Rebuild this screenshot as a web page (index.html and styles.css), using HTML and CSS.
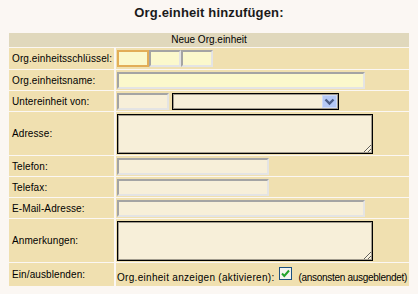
FILE: index.html
```html
<!DOCTYPE html>
<html lang="de">
<head>
    <meta charset="UTF-8">
    <title>Org.einheit hinzufügen</title>
    <link rel="stylesheet" href="styles.css">
</head>
<body>
    <h1 class="page-title">Org.einheit hinzufügen:</h1>
    <form class="org-form" method="post" action="#">
        <table class="org-table">
            <tr>
                <th colspan="2" class="table-head">Neue Org.einheit</th>
            </tr>
            <tr class="row-key">
                <td class="label">Org.einheitsschlüssel:</td>
                <td class="value">
                    <div class="field-line">
                        <input type="text" class="field hl focus key" name="key1"><input type="text" class="field hl key" name="key2"><input type="text" class="field hl key" name="key3">
                    </div>
                </td>
            </tr>
            <tr class="row-line">
                <td class="label">Org.einheitsname:</td>
                <td class="value"><input type="text" class="field hl wide" name="name"></td>
            </tr>
            <tr class="row-line">
                <td class="label">Untereinheit von:</td>
                <td class="value">
                    <div class="field-line">
                        <input type="text" class="field parent-code" name="parentCode">
                        <span class="select-box">
                            <select name="parent"><option></option></select>
                            <svg class="select-btn" width="15" height="13" viewBox="0 0 15 13">
                                <rect x="0.5" y="0.5" width="14" height="12" fill="#b5c9f6" stroke="#cfdbf8"/>
                                <path d="M3.5 4.5 L7.5 8.5 L11.5 4.5" fill="none" stroke="#4b5d86" stroke-width="2.4"/>
                            </svg>
                        </span>
                    </div>
                </td>
            </tr>
            <tr class="row-area">
                <td class="label">Adresse:</td>
                <td class="value"><textarea class="area" name="address"></textarea></td>
            </tr>
            <tr class="row-line">
                <td class="label">Telefon:</td>
                <td class="value"><input type="tel" class="field short" name="phone"></td>
            </tr>
            <tr class="row-line">
                <td class="label">Telefax:</td>
                <td class="value"><input type="tel" class="field short" name="fax"></td>
            </tr>
            <tr class="row-line">
                <td class="label">E-Mail-Adresse:</td>
                <td class="value"><input type="email" class="field wide" name="email"></td>
            </tr>
            <tr class="row-area">
                <td class="label">Anmerkungen:</td>
                <td class="value"><textarea class="area" name="notes"></textarea></td>
            </tr>
            <tr class="row-toggle">
                <td class="label">Ein/ausblenden:</td>
                <td class="value toggle"><span class="toggle-text">Org.einheit anzeigen (aktivieren):</span><svg class="check" width="13" height="13" viewBox="0 0 13 13">
                        <rect x="0.5" y="0.5" width="12" height="12" fill="#f4f4f0" stroke="#1c5180"/>
                        <path d="M3 6.5 L5.3 9 L10 3.5" fill="none" stroke="#22a22a" stroke-width="2"/>
                    </svg><span class="toggle-hint">(ansonsten ausgeblendet)</span></td>
            </tr>
        </table>
    </form>
</body>
</html>
```

FILE: styles.css
```css
body {
    margin: 0;
    padding-top: 5px;
    background-color: #fbf7f3;
    font-family: "Liberation Sans", Arial, sans-serif;
    font-size: 10px;
    color: #000;
}
.page-title {
    margin: 0 0 11px;
    font-size: 13px;
    line-height: 16px;
    text-align: center;
    letter-spacing: 0.15px;
    color: #1a1a1a;
}
.org-form {
    margin: 0;
}
.org-table {
    width: 404px;
    margin: 0 auto;
    border-spacing: 2px 1px;
}
.table-head {
    height: 14px;
    padding: 0;
    background-color: #e0d8bc;
    font-weight: normal;
    line-height: 14px;
    text-align: center;
}
.org-table td {
    padding: 0;
    background-color: #f0e0b0;
    vertical-align: middle;
}
.label {
    width: 102px;
    padding-left: 3px !important;
    letter-spacing: 0.1px;
}
.value {
    padding-left: 1px !important;
}
.row-key td {
    height: 21px;
}
.row-line td {
    height: 20px;
}
.row-area td {
    height: 43px;
}
.row-toggle td {
    height: 21px;
}
.field-line {
    display: flex;
    align-items: center;
}
.field {
    display: block;
    box-sizing: border-box;
    height: 17px;
    margin: 0;
    padding: 0 2px;
    border: 2px solid;
    border-color: #a4a4a4 #e4e4e4 #e4e4e4 #a4a4a4;
    background-color: #f7efd9;
    font: inherit;
    outline: none;
}
.field.hl {
    background-color: #fbf8cc;
}
.field.focus {
    border-color: #e2ad58;
}
.key {
    width: 32px;
}
.wide {
    width: 248px;
}
.short {
    width: 152px;
}
.parent-code {
    width: 52px;
    margin-right: 3px;
}
.select-box {
    position: relative;
    display: block;
    width: 167px;
    height: 17px;
}
.select-box select {
    appearance: none;
    box-sizing: border-box;
    width: 100%;
    height: 100%;
    margin: 0;
    border: 1px solid #000;
    border-radius: 0;
    box-shadow: inset 0 0 0 1px rgba(0, 0, 0, 0.35);
    background-color: #f7efd9;
    font: inherit;
}
.select-btn {
    position: absolute;
    top: 2px;
    right: 2px;
}
.area {
    display: block;
    box-sizing: border-box;
    width: 256px;
    height: 40px;
    margin: 0;
    border: 1px solid #000;
    box-shadow: inset 0 0 0 1px rgba(0, 0, 0, 0.35);
    background-color: #f7efd9;
    font: inherit;
    resize: both;
    outline: none;
}
.toggle {
    vertical-align: bottom !important;
    line-height: 12px;
    padding-bottom: 2px !important;
}
.toggle-text {
    letter-spacing: 0.3px;
}
.check {
    margin: 0 7px 0 4px;
    vertical-align: 1px;
}
.toggle-hint {
    letter-spacing: -0.3px;
}
```
